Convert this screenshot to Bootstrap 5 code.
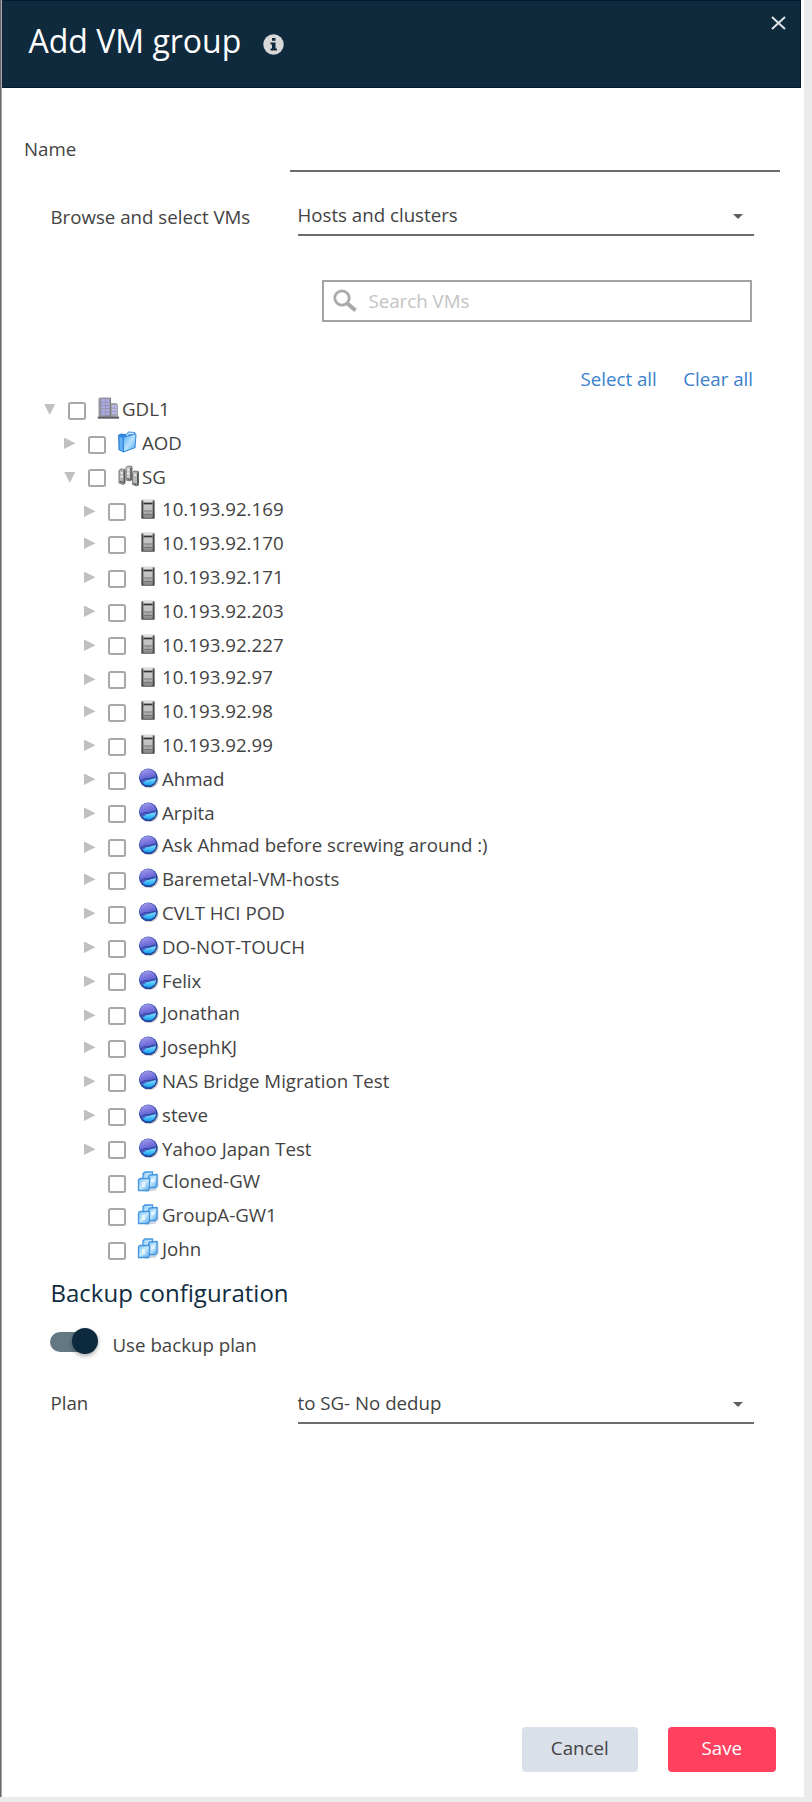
<!DOCTYPE html>
<html lang="en">
<head>
<meta charset="utf-8">
<meta name="viewport" content="width=device-width, initial-scale=1">
<title>Add VM group</title>
<link rel="stylesheet" href="https://cdn.jsdelivr.net/npm/bootstrap@5.3.0/dist/css/bootstrap.min.css">
<style>
  body { background: #ebebeb; color: #434343; font: 18.7px/28px "Open Sans", sans-serif; }
  .panel { width: 804px; height: 1797px; border-left: 1px solid #666; box-shadow: inset 1px 0 #a8a8a8, 0 1px #d9d9d9; }
  .panel-head { height: 88px; margin: 0 3px 0 1px; background: #0f293d; box-shadow: inset 0 1px #021b31, inset -1px 0 #021b31, inset 0 -1px #021b31; }
  .panel-title { font-size: 32px; line-height: 44px; margin: 19px 0 0 26.5px; font-weight: 400; }
  .info { margin: 34px 0 0 21.5px; }
  .close-x { margin: 15.5px 15px 0 auto; }
  .name-row { height: 42px; margin: 42px 24px 0 23px; }
  .name-row label { width: 265.5px; line-height: 37px; flex: none; }
  .line-input { border: 0; border-bottom: 2px solid #6c6c6c; border-radius: 0; background: none; padding: 0; }
  .field { height: 40px; margin: 0 50px 0 49.5px; }
  .field .caption { width: 247px; line-height: 42px; }
  .pick { --bs-btn-font-size: 18.7px; --bs-btn-padding-x: 0; --bs-btn-padding-y: 0; --bs-btn-border-radius: 0;
    --bs-btn-line-height: 38px; border: 0; border-bottom: 2px solid #6c6c6c; padding-right: 11px; color: #434343; }
  .pick::after { opacity: .85; position: relative; top: 1px; }
  .search { width: 430px; height: 42px; margin: 44px 52.5px 0 auto; border: 2px solid #a3a3a3; padding-left: 9.5px; }
  .search input { border: 0; padding: 1px 0 0 10.5px; font-size: 18.7px; color: #434343; }
  .search input::placeholder { color: #c3c3c3; opacity: 1; }
  .tree-links { margin: 44px 51px 0 0; line-height: 26px; gap: 26.5px; }
  .tree-links a { color: #3a7fcc; text-decoration: none; }
  .tree { margin: 0 0 0 43px; padding: 0; list-style: none; }
  .tree li { height: 34px; display: flex; align-items: center; --box: 1.5px; --arrow: .5px; --icon: -1px; white-space: nowrap; }
  .tree li:nth-child(5n+3) { --box: .5px; }
  .tree li:nth-child(5n+4) { margin-top: -2px; --box: 3px; --arrow: 2.5px; --icon: 0px; }
  .tree .lv1 { padding-left: 20px; }
  .tree .lv2 { padding-left: 40px; }
  .arrow { width: 12px; height: 12px; flex: none; position: relative; top: var(--arrow); }
  .arrow::before { content: ""; display: block; width: 11.5px; height: 11.5px; background: #c0c0c0; clip-path: polygon(0 0, 100% 50%, 0 100%); }
  .arrow.open::before { clip-path: polygon(0 0, 100% 0, 50% 100%); }
  .arrow.none::before { display: none; }
  .tree .form-check-input { width: 18px; height: 18px; margin: 0 12px; flex: none; border: 2px solid #a8a8a8; border-radius: 2.5px; position: relative; top: var(--box); }
  .tree svg { width: 24px; height: 24px; flex: none; margin: 0 1px 0 -1px; position: relative; top: var(--icon); }
  .section-title { font-size: 24px; line-height: 36px; color: #0f2c40; margin: 9px 0 0 49.5px; font-weight: 400; }
  .plan-toggle { height: 28px; margin: 17px 0 28px 49px; }
  .plan-toggle .track { width: 46px; height: 20px; border-radius: 10px; background: #637883; margin-top: 4px; }
  .plan-toggle .knob { width: 26px; height: 26px; border-radius: 50%; background: #0d293d; margin: -4px 0 0 22px; box-shadow: 0 2px 4px #0005; }
  .plan-toggle label { line-height: 34px; margin-left: 16.5px; }
  .actions { gap: 29.5px; margin: auto 28px 25.5px 0; }
  .actions .btn { --bs-btn-font-size: 18.7px; --bs-btn-border-width: 0; --bs-btn-border-radius: 4px; --bs-btn-padding-y: 0; height: 44.5px; line-height: 42px; padding-bottom: 2px; }
  .btn-cancel { width: 116.5px; --bs-btn-color: #434343; --bs-btn-bg: #d9e0e9; --bs-btn-hover-bg: #c9d2dd; }
  .btn-save { width: 108.5px; --bs-btn-color: #fff; --bs-btn-bg: #ff405f; --bs-btn-hover-bg: #e9304f; --bs-btn-hover-color: #fff; }
</style>
</head>
<body>
<svg width="0" height="0" class="position-absolute" aria-hidden="true">
  <defs>
    <linearGradient id="g-folder" x1="0" y1="0" x2="1" y2="1"><stop offset="0" stop-color="#5aaef5"/><stop offset=".5" stop-color="#b4e1fc"/><stop offset="1" stop-color="#5aa9ee"/></linearGradient>
    <linearGradient id="g-metal" x1="0" y1="0" x2="0" y2="1"><stop offset="0" stop-color="#cfcfcf"/><stop offset=".6" stop-color="#bdbdbd"/><stop offset="1" stop-color="#757575"/></linearGradient>
    <linearGradient id="g-pool" x1="0" y1="0" x2=".3" y2="1"><stop offset="0" stop-color="#a5a1ee"/><stop offset=".5" stop-color="#7871dc"/><stop offset="1" stop-color="#2e4cb0"/></linearGradient>
    <linearGradient id="g-water" x1="0" y1="0" x2="0" y2="1"><stop offset="0" stop-color="#8be3ff"/><stop offset="1" stop-color="#119ff0"/></linearGradient>
    <linearGradient id="g-vm" x1="0" y1="0" x2="1" y2="1"><stop offset="0" stop-color="#7cc3f6"/><stop offset=".5" stop-color="#c7e8fc"/><stop offset="1" stop-color="#57a6e8"/></linearGradient>
  </defs>
  <symbol id="i-dc" viewBox="0 0 24 24">
    <path d="M1.500 2.500 3 1.500h10.500v19.500h-12z" fill="#9595a0"/><path d="M13.500 7h6l1.500 2v12h-7.500z" fill="#a2a2ac"/>
    <path d="M4.500 4.500h8M4.500 7.800h8M4.500 11.100h8M4.500 14.400h8M4.500 17.700h8" stroke="#aeabf3" stroke-width="2.300" stroke-dasharray="3.500 .8"/>
    <path d="M15 10.500h5M15 13.800h5M15 17.100h5" stroke="#bab8f5" stroke-width="2.300" stroke-dasharray="2.200 .6"/>
    <path d="M13.500 2v19" stroke="#7c7c84" stroke-width="1"/><path d="M.8 21.700h21.200" stroke="#5f5f66" stroke-width="2"/>
  </symbol>
  <symbol id="i-folder" viewBox="0 0 24 24">
    <path d="M1 5 4 3.500 9 4l2.500-2.500 6 .5L19.500 4.500 18.500 18l-12 4.500-5-2.500z" fill="#3486dc"/>
    <path d="M7 7.500 18.500 4.500 17.500 17.300 7 21.200z" fill="url(#g-folder)"/><path d="M2.500 6.500l3.200 1.500v13l-2.700-1.500z" fill="#62b1f5"/>
    <path d="M9.500 5.500 12 3.200l5 .3" stroke="#c9e9ff" stroke-width="1.500" fill="none"/>
  </symbol>
  <symbol id="i-cluster" viewBox="0 0 24 24">
    <g stroke="#777" stroke-width="1"><path d="M2 6.500 4 5l4 .5v13.500l-1.500 1.500-4.500-1.500z" fill="#b5b5b5"/><path d="M9 3.500 10.500 2l4.500.5v12.500L13 17l-4-1z" fill="#c9c9c9"/><path d="M15.500 8.500l1.500-1.500 4.500.5v13L20 22l-4.500-1.500z" fill="#b9b9b9"/></g>
    <path d="M7.300 6.500v13M14 3.500v13M20.800 8.500v13" stroke="#5a5a5a" stroke-width="1.600"/>
    <path d="M3.500 9h2.500M3.500 12.500h2.500M10.300 6h2M10.300 9.500h2M17 11h2.500" stroke="#f2f2f2" stroke-width="1.500"/>
    <path d="M3 17.500l3.500 1M10 14.500l3 1M16.500 19.500l3 1" stroke="#666" stroke-width="1.400"/>
  </symbol>
  <symbol id="i-host" viewBox="0 0 24 24">
    <rect x="4.500" y="2.500" width="13" height="19.500" rx="1" fill="url(#g-metal)"/>
    <path d="M5.400 3.500v18M16.600 3.500v18" stroke="#4b4b4b" stroke-width="1.900"/>
    <path d="M6.500 4h9" stroke="#dedede" stroke-width="2"/><path d="M6.500 6.500h9" stroke="#353535" stroke-width="1.700"/>
    <path d="M6.500 14h9M6.500 17.500h9M5 21.500h12" stroke="#757575" stroke-width="1.100"/><path d="M11 14.500v6.500" stroke="#858585" stroke-width=".8"/>
  </symbol>
  <symbol id="i-pool" viewBox="0 0 24 24">
    <ellipse cx="12.300" cy="13.200" rx="9.200" ry="8.800" fill="#777" opacity=".45"/>
    <circle cx="11.300" cy="11.800" r="9.300" fill="#23459f"/><circle cx="11" cy="11.100" r="8.200" fill="url(#g-pool)"/>
    <path d="M5.800 17 9.500 14.200l9.300-2.200c.2 4.300-3 7.300-7 7.300-2.500 0-4.500-.8-6-2.300z" fill="url(#g-water)"/>
    <path d="M3.500 15 8.500 12.500l2 .7 8-2" stroke="#3348a6" stroke-width="1.300" fill="none"/>
  </symbol>
  <symbol id="i-vm" viewBox="0 0 24 24">
    <path d="M9 5.500h12.500v12L18.500 21.500 8 23z" fill="#7292ae" opacity=".4"/>
    <path d="M6 4.500 8 3h7.500v9.500H6z" fill="url(#g-vm)" stroke="#4496e0" stroke-width="1.300"/>
    <path d="M11.500 7.500 13 6l7-.5v11l-2 2h-6.500z" fill="url(#g-vm)" stroke="#4496e0" stroke-width="1.300"/>
    <path d="M1.500 11 3 9.500h9.500v10l-1.500 2H1.500z" fill="url(#g-vm)" stroke="#4496e0" stroke-width="1.300"/>
    <path d="M5 13h3v5H5z" fill="#e6f5ff"/><path d="M14 9.500h3.500v3.500H14z" fill="#e6f5ff"/>
  </symbol>
</svg>

<main class="panel bg-white d-flex flex-column">
  <header class="panel-head d-flex align-items-start text-white flex-shrink-0">
    <h1 class="panel-title">Add VM group</h1>
    <svg class="info" width="21" height="21" viewBox="0 0 21 21"><circle cx="10.500" cy="10.500" r="10.200" fill="#d8d8d8"/><path d="M9 4h3.500v2.800H9zM7.500 8.500h5v6H14v2H7.500v-2H9v-4H7.500z" fill="#10293d"/></svg>
    <svg class="close-x" width="15" height="14" viewBox="0 0 15 14"><path d="M1 1l13 12M14 1 1 13" stroke="#dfe4e8" stroke-width="2"/></svg>
  </header>

  <div class="name-row d-flex flex-shrink-0">
    <label for="name">Name</label>
    <input id="name" class="form-control line-input" type="text">
  </div>

  <div class="field d-flex flex-shrink-0 mt-4">
    <span class="caption flex-shrink-0">Browse and select VMs</span>
    <button class="btn pick dropdown-toggle flex-fill d-flex align-items-center justify-content-between" type="button">Hosts and clusters</button>
  </div>

  <div class="search d-flex align-items-center flex-shrink-0">
    <svg class="flex-shrink-0" width="25" height="24" viewBox="0 0 25 24"><circle cx="9" cy="9" r="7.200" fill="none" stroke="#a9a9a9" stroke-width="2.800"/><path d="M14.500 14.500 22.500 21.500" stroke="#a9a9a9" stroke-width="4"/></svg>
    <input class="form-control shadow-none" type="text" placeholder="Search VMs">
  </div>

  <div class="tree-links d-flex justify-content-end"><a href="#">Select all</a><a href="#">Clear all</a></div>

  <ul class="tree">
    <li><i class="arrow open"></i><input class="form-check-input" type="checkbox"><svg><use href="#i-dc"/></svg>GDL1</li>
    <li class="lv1"><i class="arrow"></i><input class="form-check-input" type="checkbox"><svg><use href="#i-folder"/></svg>AOD</li>
    <li class="lv1"><i class="arrow open"></i><input class="form-check-input" type="checkbox"><svg><use href="#i-cluster"/></svg>SG</li>
    <li class="lv2"><i class="arrow"></i><input class="form-check-input" type="checkbox"><svg><use href="#i-host"/></svg>10.193.92.169</li>
    <li class="lv2"><i class="arrow"></i><input class="form-check-input" type="checkbox"><svg><use href="#i-host"/></svg>10.193.92.170</li>
    <li class="lv2"><i class="arrow"></i><input class="form-check-input" type="checkbox"><svg><use href="#i-host"/></svg>10.193.92.171</li>
    <li class="lv2"><i class="arrow"></i><input class="form-check-input" type="checkbox"><svg><use href="#i-host"/></svg>10.193.92.203</li>
    <li class="lv2"><i class="arrow"></i><input class="form-check-input" type="checkbox"><svg><use href="#i-host"/></svg>10.193.92.227</li>
    <li class="lv2"><i class="arrow"></i><input class="form-check-input" type="checkbox"><svg><use href="#i-host"/></svg>10.193.92.97</li>
    <li class="lv2"><i class="arrow"></i><input class="form-check-input" type="checkbox"><svg><use href="#i-host"/></svg>10.193.92.98</li>
    <li class="lv2"><i class="arrow"></i><input class="form-check-input" type="checkbox"><svg><use href="#i-host"/></svg>10.193.92.99</li>
    <li class="lv2"><i class="arrow"></i><input class="form-check-input" type="checkbox"><svg><use href="#i-pool"/></svg>Ahmad</li>
    <li class="lv2"><i class="arrow"></i><input class="form-check-input" type="checkbox"><svg><use href="#i-pool"/></svg>Arpita</li>
    <li class="lv2"><i class="arrow"></i><input class="form-check-input" type="checkbox"><svg><use href="#i-pool"/></svg>Ask Ahmad before screwing around :)</li>
    <li class="lv2"><i class="arrow"></i><input class="form-check-input" type="checkbox"><svg><use href="#i-pool"/></svg>Baremetal-VM-hosts</li>
    <li class="lv2"><i class="arrow"></i><input class="form-check-input" type="checkbox"><svg><use href="#i-pool"/></svg>CVLT HCI POD</li>
    <li class="lv2"><i class="arrow"></i><input class="form-check-input" type="checkbox"><svg><use href="#i-pool"/></svg>DO-NOT-TOUCH</li>
    <li class="lv2"><i class="arrow"></i><input class="form-check-input" type="checkbox"><svg><use href="#i-pool"/></svg>Felix</li>
    <li class="lv2"><i class="arrow"></i><input class="form-check-input" type="checkbox"><svg><use href="#i-pool"/></svg>Jonathan</li>
    <li class="lv2"><i class="arrow"></i><input class="form-check-input" type="checkbox"><svg><use href="#i-pool"/></svg>JosephKJ</li>
    <li class="lv2"><i class="arrow"></i><input class="form-check-input" type="checkbox"><svg><use href="#i-pool"/></svg>NAS Bridge Migration Test</li>
    <li class="lv2"><i class="arrow"></i><input class="form-check-input" type="checkbox"><svg><use href="#i-pool"/></svg>steve</li>
    <li class="lv2"><i class="arrow"></i><input class="form-check-input" type="checkbox"><svg><use href="#i-pool"/></svg>Yahoo Japan Test</li>
    <li class="lv2"><i class="arrow none"></i><input class="form-check-input" type="checkbox"><svg><use href="#i-vm"/></svg>Cloned-GW</li>
    <li class="lv2"><i class="arrow none"></i><input class="form-check-input" type="checkbox"><svg><use href="#i-vm"/></svg>GroupA-GW1</li>
    <li class="lv2"><i class="arrow none"></i><input class="form-check-input" type="checkbox"><svg><use href="#i-vm"/></svg>John</li>
  </ul>

  <h2 class="section-title">Backup configuration</h2>
  <div class="plan-toggle d-flex align-items-start flex-shrink-0">
    <div class="track"><div class="knob float-start"></div></div>
    <label>Use backup plan</label>
  </div>
  <div class="field d-flex flex-shrink-0">
    <span class="caption flex-shrink-0" style="line-height:37px">Plan</span>
    <button class="btn pick dropdown-toggle flex-fill d-flex align-items-center justify-content-between" type="button">to SG- No dedup</button>
  </div>

  <footer class="actions d-flex justify-content-end">
    <button class="btn btn-cancel" type="button">Cancel</button>
    <button class="btn btn-save" type="button">Save</button>
  </footer>
</main>
<script src="https://cdn.jsdelivr.net/npm/bootstrap@5.3.0/dist/js/bootstrap.bundle.min.js"></script>
</body>
</html>
